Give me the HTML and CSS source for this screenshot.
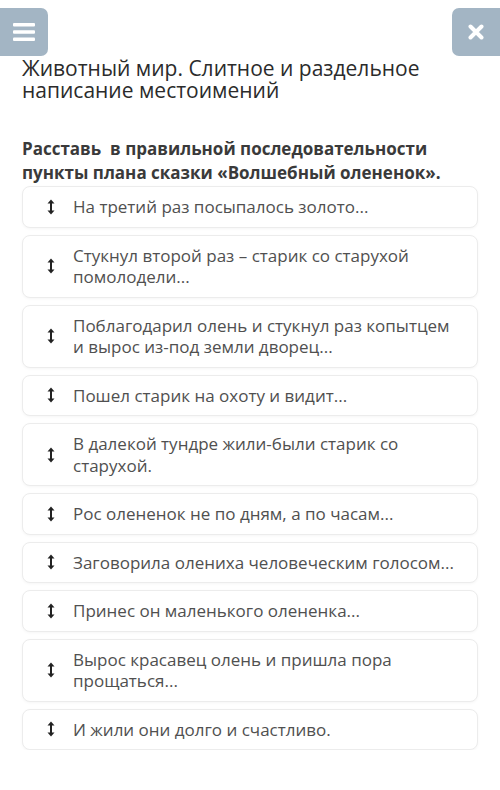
FILE: index.html
```html
<!DOCTYPE html>
<html lang="ru">
<head>
    <meta charset="UTF-8">
    <meta name="viewport" content="width=device-width, initial-scale=1.0">
    <title>Животный мир</title>
    <link rel="stylesheet" href="styles.css">
</head>
<body>
    <div class="topbar">
        <button class="icon-button menu-button" aria-label="Меню">
            <svg width="22" height="18" viewBox="0 0 22 18">
                <rect x="0" y="0" width="22" height="3.5" rx="1" fill="#fff"/>
                <rect x="0" y="7.2" width="22" height="3.5" rx="1" fill="#fff"/>
                <rect x="0" y="14.5" width="22" height="3.5" rx="1" fill="#fff"/>
            </svg>
        </button>
        <button class="icon-button close-button" aria-label="Закрыть">
            <svg width="16" height="16" viewBox="0 0 16 16">
                <path d="M2.5 2.5 L13.5 13.5 M13.5 2.5 L2.5 13.5" stroke="#fff" stroke-width="4" stroke-linecap="round"/>
            </svg>
        </button>
    </div>

    <h1 class="lesson-title">Животный мир. Слитное и раздельное написание местоимений</h1>

    <p class="task">Расставь&nbsp; в правильной последовательности пункты плана сказки «Волшебный олененок».</p>

    <ul class="sort-list">
        <li class="sort-item"><span class="handle"></span><span class="item-text">На третий раз посыпалось золото...</span></li>
        <li class="sort-item"><span class="handle"></span><span class="item-text">Стукнул второй раз – старик со старухой помолодели...</span></li>
        <li class="sort-item"><span class="handle"></span><span class="item-text">Поблагодарил олень и стукнул раз копытцем и вырос из-под земли дворец...</span></li>
        <li class="sort-item"><span class="handle"></span><span class="item-text">Пошел старик на охоту и видит...</span></li>
        <li class="sort-item"><span class="handle"></span><span class="item-text">В далекой тундре жили-были старик со старухой.</span></li>
        <li class="sort-item"><span class="handle"></span><span class="item-text">Рос олененок не по дням, а по часам...</span></li>
        <li class="sort-item"><span class="handle"></span><span class="item-text">Заговорила олениха человеческим голосом...</span></li>
        <li class="sort-item"><span class="handle"></span><span class="item-text">Принес он маленького олененка...</span></li>
        <li class="sort-item"><span class="handle"></span><span class="item-text">Вырос красавец олень и пришла пора прощаться...</span></li>
        <li class="sort-item"><span class="handle"></span><span class="item-text">И жили они долго и счастливо.</span></li>
    </ul>

    <script>
        // drag handle icon: vertical double arrow
        const arrow = '<svg width="8" height="16" viewBox="0 0 8 16">' +
            '<path d="M4 2 V14" stroke="#222" stroke-width="2"/>' +
            '<path d="M0.5 4.5 L4 0.5 L7.5 4.5 Z M0.5 11.5 L4 15.5 L7.5 11.5 Z" fill="#222"/>' +
            '</svg>';
        document.querySelectorAll('.handle').forEach(h => h.innerHTML = arrow);
    </script>
</body>
</html>
```

FILE: styles.css
```css
* {
    margin: 0;
    padding: 0;
    box-sizing: border-box;
}

body {
    background: #fff;
    font-family: 'Open Sans', 'Noto Sans', Arial, sans-serif;
    color: #333;
    width: 500px;
}

.topbar {
    display: flex;
    justify-content: space-between;
    padding-top: 8px;
}

.icon-button {
    width: 48px;
    height: 48px;
    border: none;
    background: #a3b5c4;
    display: flex;
    align-items: center;
    justify-content: center;
}

.menu-button {
    border-radius: 0 7px 7px 0;
}

.close-button {
    border-radius: 7px 0 0 7px;
}

.lesson-title {
    font-size: 21px;
    font-weight: 400;
    line-height: 22px;
    color: #2b2b2b;
    padding: 1px 22px 0;
}

.task {
    font-size: 17px;
    font-weight: 700;
    line-height: 24px;
    color: #3a3a3a;
    padding: 36px 22px 0;
}

.sort-list {
    list-style: none;
    display: flex;
    flex-direction: column;
    gap: 7px;
    padding: 1px 22px 0;
}

.sort-item {
    display: flex;
    align-items: center;
    min-height: 41px;
    padding: 9px 16px 9px 24px;
    border: 1px solid #ececec;
    border-radius: 8px;
    box-shadow: 0 1px 3px rgba(0, 0, 0, 0.04);
    background: #fff;
}

.handle {
    width: 8px;
    display: flex;
    margin-right: 18px;
    flex-shrink: 0;
}

.item-text {
    font-size: 17px;
    line-height: 21.5px;
    color: #505050;
}
```
